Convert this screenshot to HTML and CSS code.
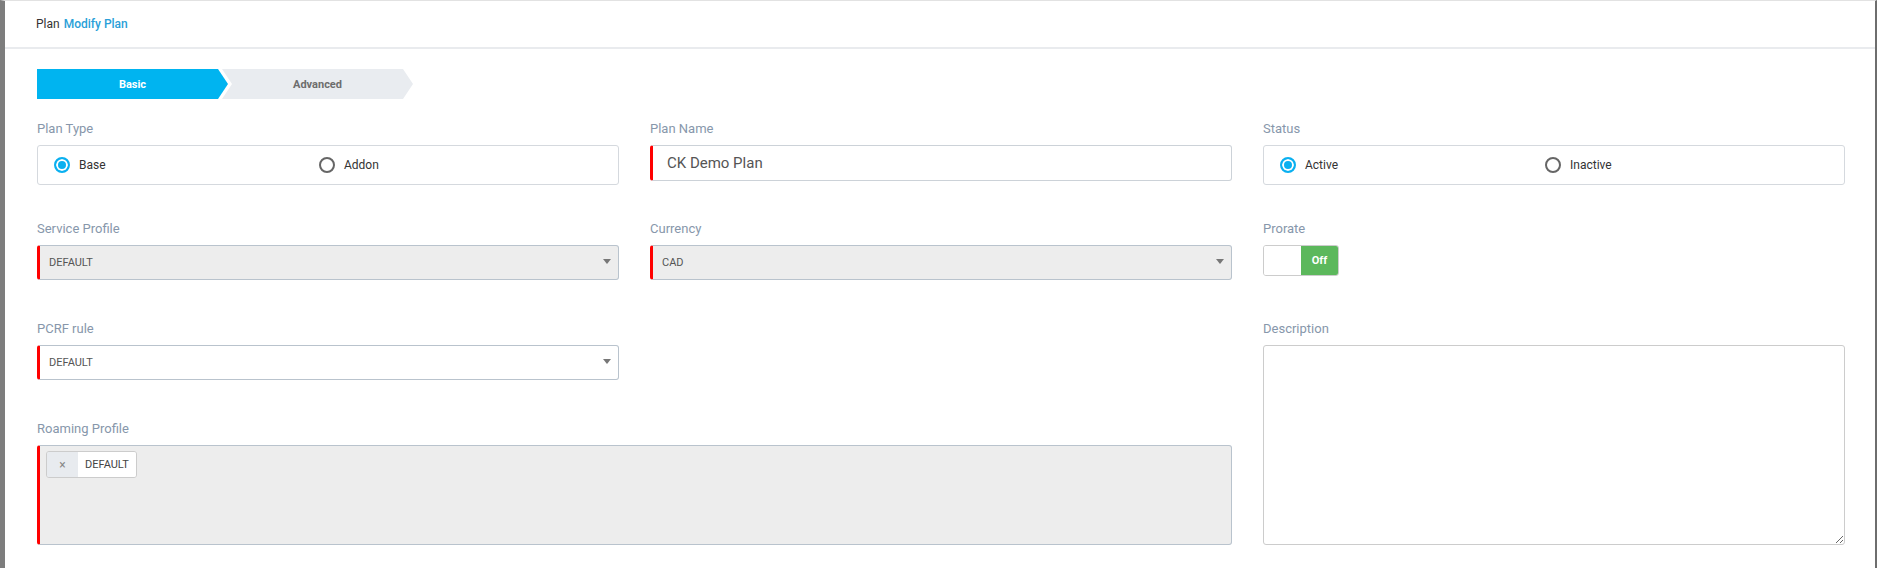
FILE: index.html
```html
<!DOCTYPE html>
<html lang="en">
<head>
    <meta charset="UTF-8">
    <title>Modify Plan</title>
    <link rel="stylesheet" href="styles.css">
</head>
<body>
<div class="page">
    <div class="header">
        <span class="crumb">Plan</span> <span class="crumb-current">Modify Plan</span>
    </div>

    <div class="content">
        <div class="steps">
            <div class="step active">Basic</div>
            <div class="step">Advanced</div>
        </div>

        <form class="plan-form" action="">
            <div class="field f-type">
                <label class="lbl">Plan Type</label>
                <div class="radio-box">
                    <label class="radio"><span class="dot checked"></span>Base</label>
                    <label class="radio"><span class="dot"></span>Addon</label>
                </div>
            </div>

            <div class="field f-name">
                <label class="lbl">Plan Name</label>
                <input class="text-input required" type="text" value="CK Demo Plan">
            </div>

            <div class="field f-status">
                <label class="lbl">Status</label>
                <div class="radio-box">
                    <label class="radio"><span class="dot checked"></span>Active</label>
                    <label class="radio"><span class="dot"></span>Inactive</label>
                </div>
            </div>

            <div class="field f-service">
                <label class="lbl">Service Profile</label>
                <div class="select required disabled">DEFAULT<span class="caret"></span></div>
            </div>

            <div class="field f-currency">
                <label class="lbl">Currency</label>
                <div class="select required disabled">CAD<span class="caret"></span></div>
            </div>

            <div class="field f-prorate">
                <label class="lbl">Prorate</label>
                <div class="toggle"><span class="toggle-on"></span><span class="toggle-off">Off</span></div>
            </div>

            <div class="field f-pcrf">
                <label class="lbl">PCRF rule</label>
                <div class="select required">DEFAULT<span class="caret"></span></div>
            </div>

            <div class="field f-desc">
                <label class="lbl">Description</label>
                <textarea class="desc"></textarea>
            </div>

            <div class="field f-roaming">
                <label class="lbl">Roaming Profile</label>
                <div class="multi required">
                    <span class="tag"><span class="tag-x">×</span><span class="tag-text">DEFAULT</span></span>
                </div>
            </div>
        </form>
    </div>
</div>
</body>
</html>
```

FILE: styles.css
```css
*{margin:0;padding:0;box-sizing:border-box;outline:none;}
html,body{height:100%;}
body{font-family:Roboto,"Liberation Sans",sans-serif;background:#fff;color:#333;}

.page{
    min-height:100%;
    border-left:5px solid #7d7d7d;
    border-right:2px solid #6e6e6e;
    border-top:1px solid #e2e2e2;
}

.header{
    height:48px;
    padding-left:31px;
    display:flex;
    align-items:center;
    border-bottom:2px solid #e9ebee;
    font-size:12px;
}
.crumb{color:#333;margin-right:4px;}
.crumb-current{color:#2a9fd8;font-weight:500;}

.content{padding:20px 0 0 32px;}

/* wizard steps */
.steps{display:flex;height:30px;}
.step{
    width:191px;
    display:flex;align-items:center;justify-content:center;
    font-size:11px;font-weight:bold;
    color:#6d6d6d;background:#e9ecf0;
    margin-left:-6px;
    clip-path:polygon(0 0,calc(100% - 10px) 0,100% 50%,calc(100% - 10px) 100%,0 100%,10px 50%);
}
.step.active{
    background:#00b4f0;color:#fff;margin-left:0;
    clip-path:polygon(0 0,calc(100% - 10px) 0,100% 50%,calc(100% - 10px) 100%,0 100%);
}

/* form grid */
.plan-form{
    width:1808px;
    margin-top:22px;
    display:grid;
    grid-template-columns:582px 582px 582px;
    grid-template-rows:100px 100px 100px 100px;
    column-gap:31px;
}
.f-type{grid-column:1;grid-row:1;}
.f-name{grid-column:2;grid-row:1;}
.f-status{grid-column:3;grid-row:1;}
.f-service{grid-column:1;grid-row:2;}
.f-currency{grid-column:2;grid-row:2;}
.f-prorate{grid-column:3;grid-row:2;}
.f-pcrf{grid-column:1;grid-row:3;}
.f-desc{grid-column:3;grid-row:3 / span 2;}
.f-roaming{grid-column:1 / span 2;grid-row:4;}

.lbl{display:block;height:16px;line-height:16px;margin-bottom:8px;font-size:13px;color:#8797ab;}

/* radios */
.radio-box{
    height:40px;
    border:1px solid #d5d9de;border-radius:3px;
    display:grid;grid-template-columns:1fr 1fr;
    padding:0 34px 0 16px;
    align-items:center;
}
.radio{display:flex;align-items:center;font-size:12px;color:#333;}
.dot{
    width:16px;height:16px;border-radius:50%;
    border:2px solid #666;margin-right:9px;
}
.dot.checked{border-color:#0ab0f0;box-shadow:inset 0 0 0 2px #fff;background:#0ab0f0;}

/* inputs */
.text-input{
    width:100%;height:36px;
    border:1px solid #ccd2d8;border-radius:3px;
    padding-left:14px;
    font-family:Roboto,"Liberation Sans",sans-serif;font-size:15px;color:#555;
}
.required{border-left:3px solid #f00 !important;}

.select{
    position:relative;
    height:35px;
    border:1px solid #b9c3cd;border-radius:3px;
    background:#fff;
    display:flex;align-items:center;
    padding-left:9px;
    font-size:11px;color:#555;
}
.select.disabled{background:#ededed;}
.caret{
    position:absolute;right:7px;top:13px;
    border-left:4px solid transparent;border-right:4px solid transparent;
    border-top:5px solid #777;
}

/* toggle */
.toggle{
    display:flex;width:76px;height:31px;
    border:1px solid #ccc;border-radius:3px;overflow:hidden;
}
.toggle-on{flex:1;background:#fff;}
.toggle-off{
    flex:1;background:#5cb85c;color:#fff;
    font-size:11px;font-weight:bold;
    display:flex;align-items:center;justify-content:center;
}

.desc{
    display:block;width:100%;height:200px;
    border:1px solid #ccc;border-radius:3px;
    font-family:inherit;
}

/* roaming multi select */
.multi{
    height:100px;
    border:1px solid #b9c3cd;border-radius:3px;
    background:#ededed;
    padding:5px 6px;
}
.tag{
    display:inline-flex;height:27px;
    border:1px solid #ccc;border-radius:3px;overflow:hidden;
    font-size:11px;
}
.tag-x{width:31px;background:#e8ebef;color:#888;display:flex;align-items:center;justify-content:center;font-size:12px;}
.tag-text{background:#fff;color:#444;padding:0 7px;display:flex;align-items:center;}
```
